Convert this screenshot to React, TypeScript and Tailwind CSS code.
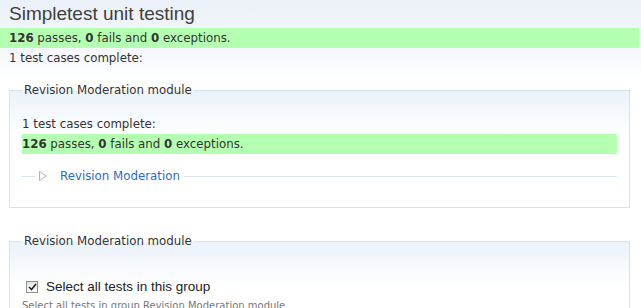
import React from "react";

function PassBar({ inset }: { inset?: boolean }) {
  return (
    <div
      className={
        inset
          ? "h-[20px] bg-[#b5ffb2] font-['DejaVu_Sans',Verdana,sans-serif] text-[11.8px] leading-[20px] text-[#333]"
          : "h-[20px] bg-[#b5ffb2] pl-[9px] font-['DejaVu_Sans',Verdana,sans-serif] text-[11.8px] leading-[20px] text-[#333]"
      }
    >
      <b>126</b> passes, <b>0</b> fails and <b>0</b> exceptions.
    </div>
  );
}

function Legend({ children }: { children: React.ReactNode }) {
  return (
    <legend className="px-[2px] font-['DejaVu_Sans',Verdana,sans-serif] text-[11.8px] leading-[16px] text-[#333]">
      {children}
    </legend>
  );
}

export default function App() {
  return (
    <div className="min-h-screen bg-[linear-gradient(to_bottom,#ebf1f9_0px,#f6f8fc_55px,#ffffff_78px)] pr-[2px] text-[#333]">
      <h2 className="h-[28px] pl-[9px] font-['Liberation_Sans',Arial,sans-serif] text-[19px] leading-[28px] font-normal text-[#404040]">
        Simpletest unit testing
      </h2>
      <PassBar />
      <div className="h-[20px] pl-[9px] font-['DejaVu_Sans',Verdana,sans-serif] text-[11.8px] leading-[20px]">
        1 test cases complete:
      </div>

      <fieldset className="mx-[9px] mt-[14px] border border-[#d6e4ef] bg-[linear-gradient(to_bottom,#ebf2fa_0px,#ffffff_45px)] px-[12px] pt-[16px] pb-[23px]">
        <Legend>Revision Moderation module</Legend>
        <div className="h-[20px] font-['DejaVu_Sans',Verdana,sans-serif] text-[11.8px] leading-[20px]">
          1 test cases complete:
        </div>
        <PassBar inset />
        <fieldset className="mt-[14px] border-t border-[#d6e4ef] pl-[13px]">
          <legend className="flex items-center px-[4px] font-['DejaVu_Sans',Verdana,sans-serif] text-[11.8px] leading-[16px]">
            <svg width="8" height="10" viewBox="0 0 8 10">
              <polygon points="0.5,0.5 7,5 0.5,9.5" fill="none" stroke="#b0b0b0" strokeWidth="1" />
            </svg>
            <a className="ml-[13px] text-[#1f6ec3]">Revision Moderation</a>
          </legend>
        </fieldset>
      </fieldset>

      <fieldset className="mx-[9px] mt-[25px] border border-[#d6e4ef] bg-[linear-gradient(to_bottom,#ebf2fa_0px,#ffffff_45px)] px-[12px] pt-[29px] pb-[20px]">
        <Legend>Revision Moderation module</Legend>
        <div className="flex h-[18px] items-center pl-[4px]">
          <span className="flex h-[12px] w-[12px] items-center justify-center border border-[#8e8e8e] bg-[linear-gradient(to_bottom,#e4e4e4,#ffffff)]">
            <svg width="9" height="8" viewBox="0 0 9 8">
              <path d="M1 4 L3.5 6.5 L8 1" fill="none" stroke="#222" strokeWidth="1.6" />
            </svg>
          </span>
          <label className="ml-[8px] font-['Liberation_Sans',Arial,sans-serif] text-[13.5px] leading-[18px] text-[#222]">
            Select all tests in this group
          </label>
        </div>
        <div className="mt-[3px] font-['DejaVu_Sans',Verdana,sans-serif] text-[10px] leading-[14px] text-[#777]">
          Select all tests in group Revision Moderation module
        </div>
      </fieldset>
    </div>
  );
}
